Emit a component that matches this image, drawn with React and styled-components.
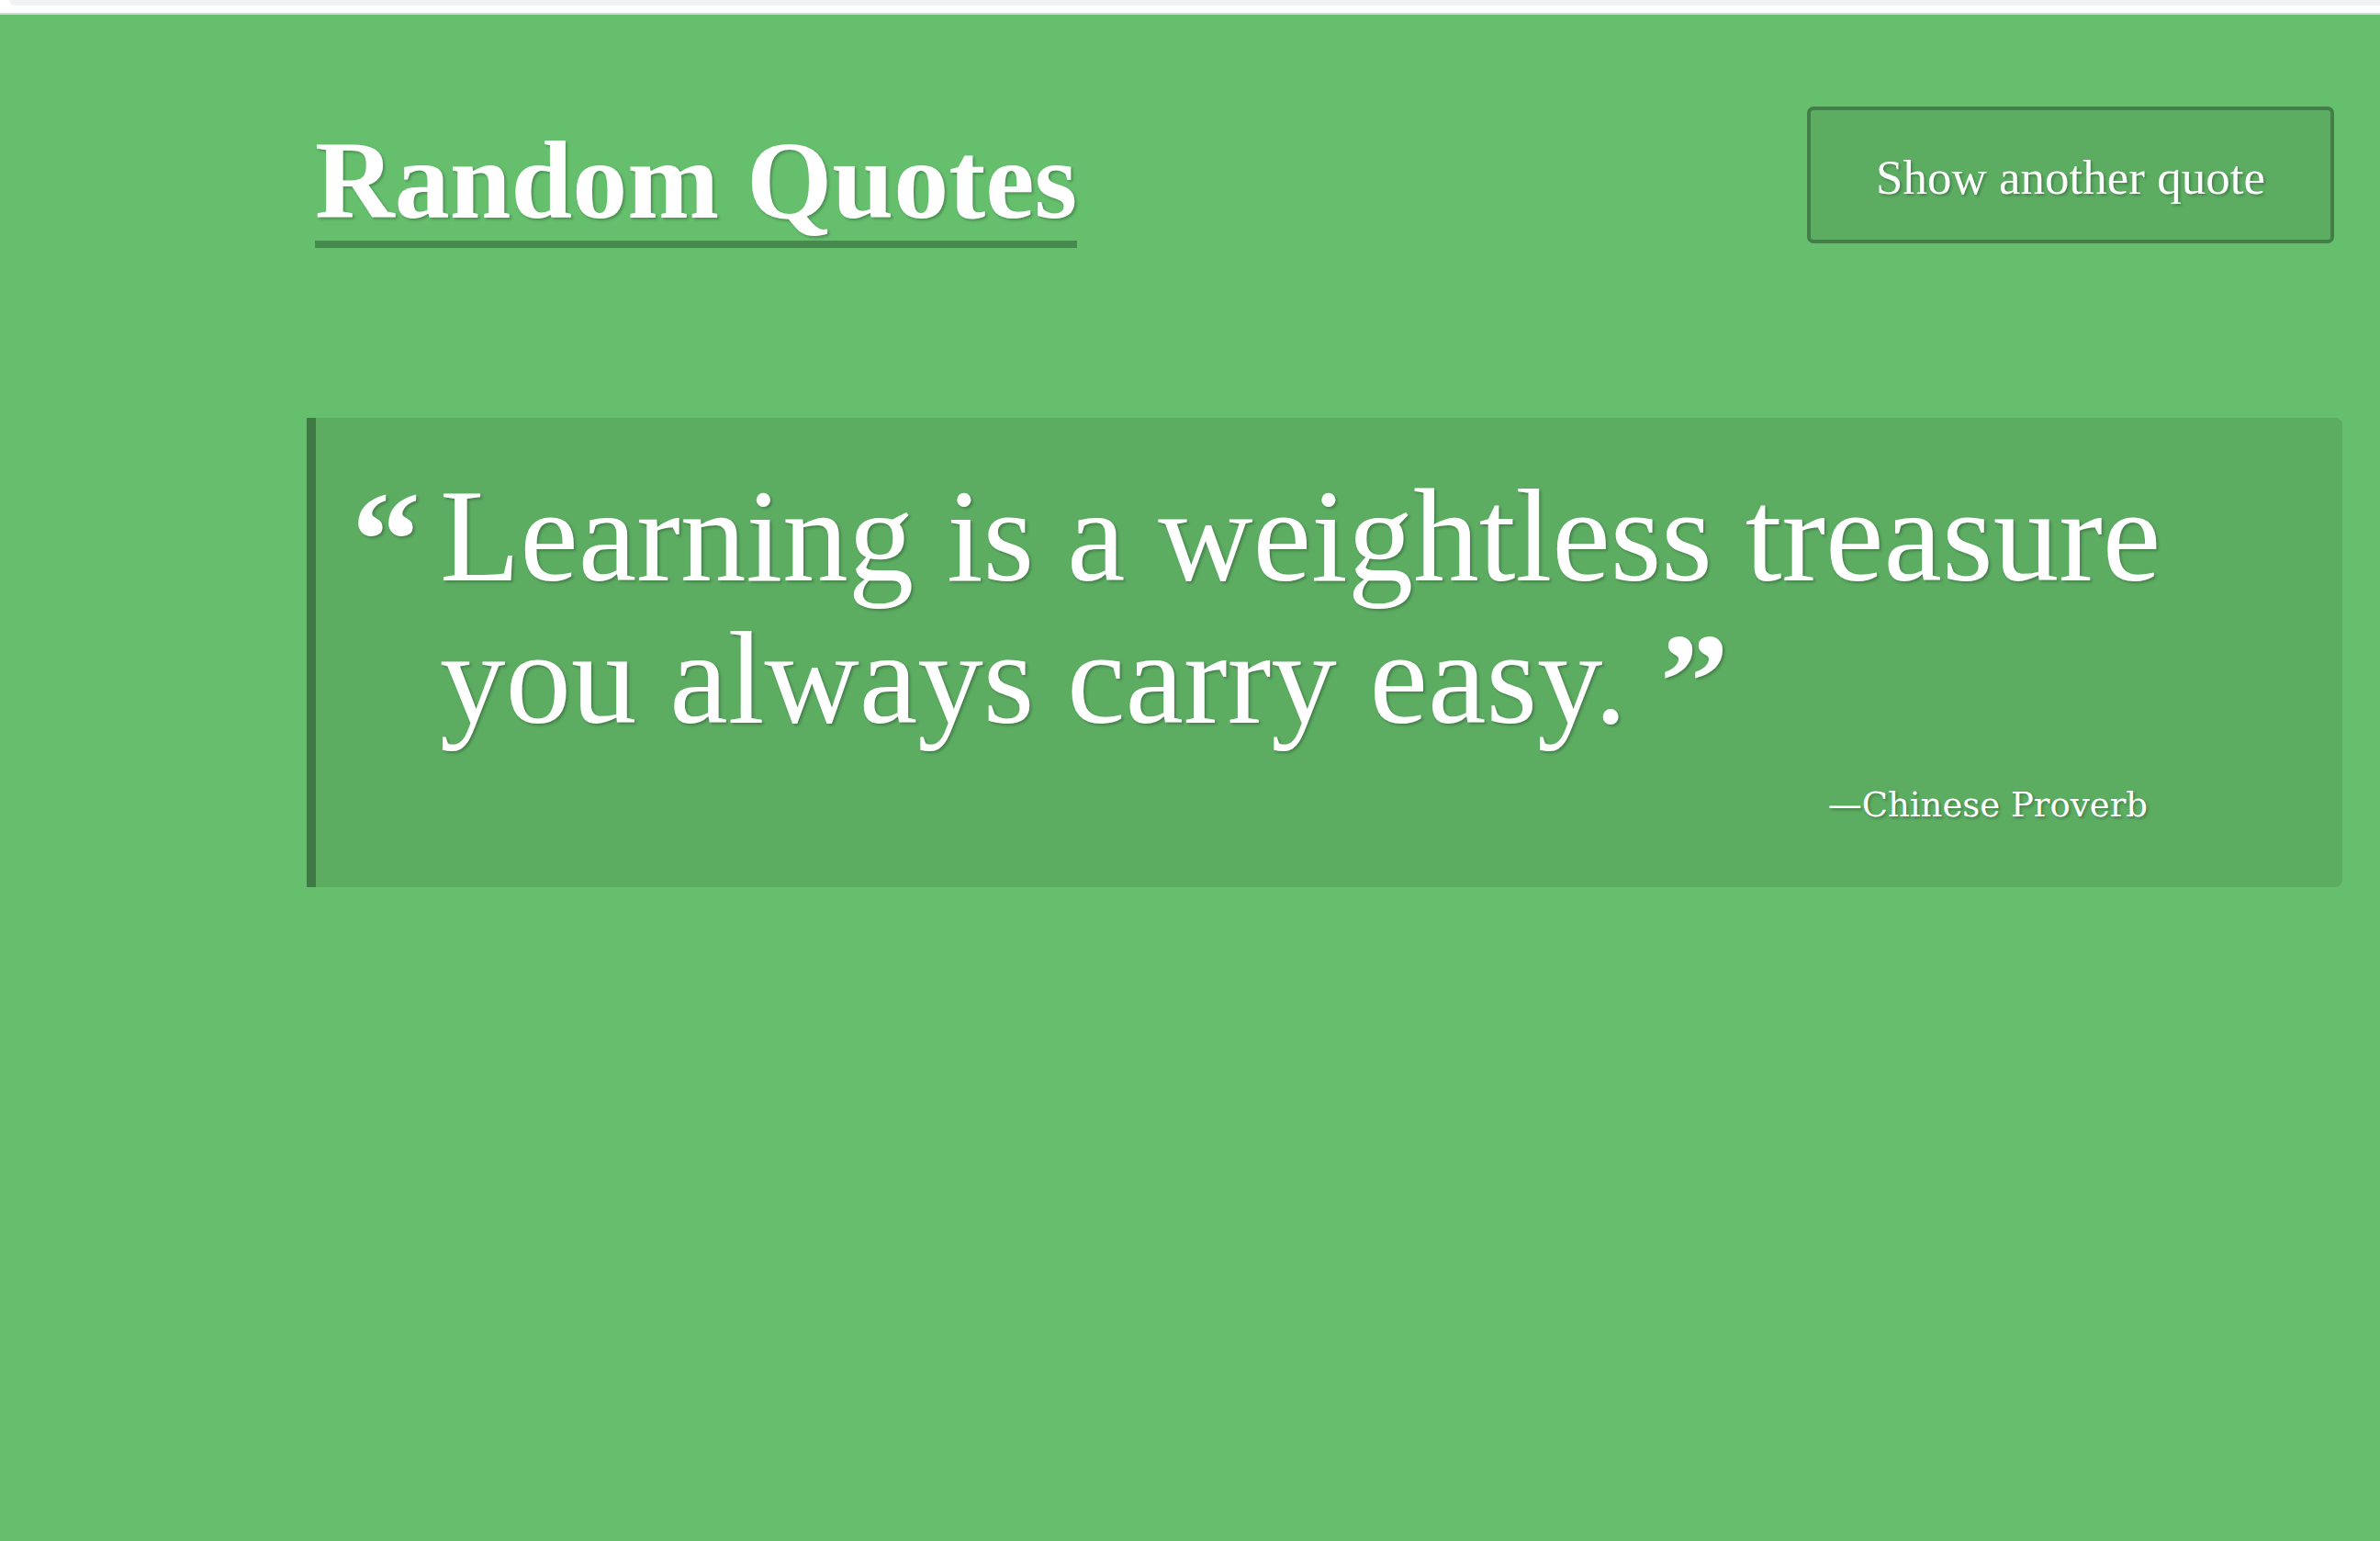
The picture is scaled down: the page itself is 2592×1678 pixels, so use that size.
import React from "react";
import styled, { createGlobalStyle } from "styled-components";

const GlobalStyle = createGlobalStyle`
  html, body {
    margin: 0;
    padding: 0;
    background: #65bf6d;
  }
  body {
    font-family: "Liberation Serif", serif;
    color: #ffffff;
    min-height: 1678px;
  }
`;

// --- top strip (browser chrome remnant) ---
const TopStrip = styled.div`
  height: 14px;
  background: #ffffff;
  border-bottom: 2px solid #d4d6d8;
  display: flex;
  padding-left: 10px;
`;

const TopPill = styled.div`
  flex: 1;
  height: 6px;
  background: #f1f2f4;
  border-radius: 0 0 0 10px;
`;

const Page = styled.main`
  width: 2217px;
  margin-left: 334px;
`;

const Header = styled.header`
  display: flex;
  justify-content: space-between;
  align-items: flex-start;
  padding: 100px 9px 0;
`;

const Title = styled.h1`
  margin: 16px 0 0;
  font-family: "Liberation Serif", serif;
  font-weight: 700;
  font-size: 120px;
  line-height: 130px;
  border-bottom: 8px solid #478a4d;
  text-shadow: 2px 2px 3px rgba(0, 0, 0, 0.25);
`;

const NewQuoteButton = styled.button`
  width: 574px;
  height: 149px;
  box-sizing: border-box;
  background: #5cad62;
  border: 4px solid #437e48;
  border-radius: 7px;
  color: #ffffff;
  font-family: "Liberation Serif", serif;
  font-size: 53px;
  line-height: 1;
  padding: 6px 0 0;
  display: flex;
  align-items: center;
  justify-content: center;
  cursor: pointer;
  text-shadow: 2px 2px 3px rgba(0, 0, 0, 0.25);
`;

const QuoteCard = styled.section`
  margin-top: 185px;
  background: #5cac62;
  border-left: 10px solid #3f7a45;
  border-radius: 0 8px 8px 0;
  padding: 52px 100px 65px 39px;
`;

const QuoteBody = styled.blockquote`
  margin: 0;
  display: flex;
  align-items: flex-start;
  font-family: "Liberation Serif", serif;
  font-size: 143px;
  line-height: 155px;
  text-shadow: 2px 2px 3px rgba(0, 0, 0, 0.25);
`;

const OpenMark = styled.span`
  flex: 0 0 96px;
  font-weight: 700;
  font-size: 150px;
  line-height: 155px;
  margin-top: 4px;
`;

const QuoteText = styled.p`
  margin: 0;
  flex: 1;
`;

const CloseMark = styled.span`
  font-weight: 700;
  font-size: 150px;
  line-height: 0;
  vertical-align: -6px;
`;

const Author = styled.p`
  margin: 36px 112px 0 0;
  text-align: right;
  font-family: "DejaVu Serif", serif;
  font-size: 37px;
  line-height: 48px;
  text-shadow: 2px 2px 3px rgba(0, 0, 0, 0.25);
`;

const quote = {
  text: "Learning is a weightless treasure you always carry easy.",
  author: "Chinese Proverb",
};

const App = () => {
  return (
    <>
      <GlobalStyle />
      <TopStrip>
        <TopPill />
      </TopStrip>
      <Page>
        <Header>
          <Title>Random Quotes</Title>
          <NewQuoteButton>Show another quote</NewQuoteButton>
        </Header>
        <QuoteCard>
          <QuoteBody>
            <OpenMark>“</OpenMark>
            <QuoteText>
              {quote.text} <CloseMark>”</CloseMark>
            </QuoteText>
          </QuoteBody>
          <Author>—{quote.author}</Author>
        </QuoteCard>
      </Page>
    </>
  );
};

export default App;
